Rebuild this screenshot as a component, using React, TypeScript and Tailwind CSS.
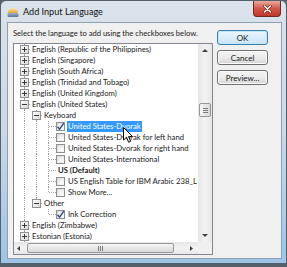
import React from 'react';

type Kind = 'plus' | 'minus' | 'check' | 'bold';

interface Row {
  level: number;
  label: string;
  kind: Kind;
  checked?: boolean;
  selected?: boolean;
  guides: boolean[];
  last?: boolean;
}

const rows: Row[] = [
  { level: 0, label: 'English (Republic of the Philippines)', kind: 'plus', guides: [] },
  { level: 0, label: 'English (Singapore)', kind: 'plus', guides: [] },
  { level: 0, label: 'English (South Africa)', kind: 'plus', guides: [] },
  { level: 0, label: 'English (Trinidad and Tobago)', kind: 'plus', guides: [] },
  { level: 0, label: 'English (United Kingdom)', kind: 'plus', guides: [] },
  { level: 0, label: 'English (United States)', kind: 'minus', guides: [] },
  { level: 1, label: 'Keyboard', kind: 'minus', guides: [true] },
  { level: 2, label: 'United States-Dvorak', kind: 'check', checked: true, selected: true, guides: [true, true] },
  { level: 2, label: 'United States-Dvorak for left hand', kind: 'check', guides: [true, true] },
  { level: 2, label: 'United States-Dvorak for right hand', kind: 'check', guides: [true, true] },
  { level: 2, label: 'United States-International', kind: 'check', guides: [true, true] },
  { level: 2, label: 'US (Default)', kind: 'bold', guides: [true, true] },
  { level: 2, label: 'US English Table for IBM Arabic 238_L', kind: 'check', guides: [true, true] },
  { level: 2, label: 'Show More...', kind: 'check', guides: [true, true], last: true },
  { level: 1, label: 'Other', kind: 'minus', guides: [true], last: true },
  { level: 2, label: 'Ink Correction', kind: 'check', checked: true, guides: [true, false], last: true },
  { level: 0, label: 'English (Zimbabwe)', kind: 'plus', guides: [] },
  { level: 0, label: 'Estonian (Estonia)', kind: 'plus', guides: [] },
];

const LINE = '#a0a0a0';

function GuideCell({ on }: { on: boolean }) {
  return (
    <svg width="12" height="11" className="shrink-0" shapeRendering="crispEdges">
      {on && <line x1="6.5" y1="0" x2="6.5" y2="11" stroke={LINE} strokeDasharray="1 1" />}
    </svg>
  );
}

function OwnCell({ row }: { row: Row }) {
  const expander = row.kind === 'plus' || row.kind === 'minus';
  const w = expander ? 12 : 14;
  return (
    <svg width={w} height="11" className="shrink-0" shapeRendering="crispEdges">
      <line x1="6.5" y1="0" x2="6.5" y2={row.last ? 5.5 : 11} stroke={LINE} strokeDasharray="1 1" />
      <line x1="7" y1="5.5" x2={w} y2="5.5" stroke={LINE} strokeDasharray="1 1" />
      {expander && (
        <>
          <defs>
            <linearGradient id="exp" x1="0" y1="0" x2="1" y2="1">
              <stop offset="0" stopColor="#ffffff" />
              <stop offset="1" stopColor="#d6d6d6" />
            </linearGradient>
          </defs>
          <rect x="2.5" y="1.5" width="8" height="8" fill="url(#exp)" stroke="#919191" />
          <line x1="4" y1="5.5" x2="9" y2="5.5" stroke="#3a3a3a" />
          {row.kind === 'plus' && <line x1="6.5" y1="3" x2="6.5" y2="8" stroke="#3a3a3a" />}
        </>
      )}
    </svg>
  );
}

function CheckBox({ checked }: { checked?: boolean }) {
  return (
    <span className="relative w-[9px] h-[9px] shrink-0 border border-[#8e8f8f] bg-gradient-to-br from-[#d8d8d8] to-[#fbfbfb] flex items-center justify-center">
      <span className="w-[5px] h-[5px] bg-gradient-to-br from-[#e6e6e6] to-[#ffffff]" />
      {checked && (
        <svg width="9" height="9" viewBox="0 0 9 9" className="absolute -left-[1px] -top-[1px]">
          <path d="M1.5 4.8 L3.6 7.2 L7.8 1.2" fill="none" stroke="#2d4a8a" strokeWidth="1.4" />
        </svg>
      )}
    </span>
  );
}

function TreeRow({ row }: { row: Row }) {
  return (
    <div className="flex items-center h-[11px] pl-[4px] whitespace-nowrap">
      {row.guides.map((g, i) => (
        <GuideCell key={i} on={g} />
      ))}
      <OwnCell row={row} />
      {row.kind === 'check' && <CheckBox checked={row.checked} />}
      <span
        className={
          'px-[1px] leading-[11px] h-[11px] ' +
          (row.selected ? 'bg-[#3399ff] text-white' : 'text-[#1a1a1a]') +
          (row.kind === 'bold' ? ' font-bold' : '') +
          (row.kind === 'check' ? ' ml-[2px]' : ' ml-[1px]')
        }
      >
        {row.label}
      </span>
    </div>
  );
}

function Arrow({ dir }: { dir: 'up' | 'down' | 'left' | 'right' }) {
  const pts = {
    up: '2,5 5,2 8,5',
    down: '2,2 5,5 8,2',
    left: '5,2 2,4.5 5,7',
    right: '3,2 6,4.5 3,7',
  }[dir];
  return (
    <svg width="10" height="8" viewBox="0 0 10 8">
      <polygon points={pts} fill="#404040" />
    </svg>
  );
}

function Button({ label, primary }: { label: string; primary?: boolean }) {
  return (
    <div
      className={
        'w-[51px] h-[15px] rounded-[3px] border flex items-center justify-center text-[8px] text-[#1a1a1a] ' +
        (primary
          ? 'border-[#3c7fb1] bg-gradient-to-b from-[#eaf6fd] to-[#c9e5f8] shadow-[inset_0_0_0_1px_#bfe6fb]'
          : 'border-[#707070] bg-gradient-to-b from-[#f4f4f4] via-[#ebebeb] to-[#d6d6d6] shadow-[inset_0_0_0_1px_#fbfbfb]')
      }
    >
      {label}
    </div>
  );
}

export default function App() {
  return (
    <div className="relative w-[287px] h-[267px] overflow-hidden bg-[#56606a] font-['Lato',sans-serif]">
      {/* Window frame */}
      <div className="h-[264px] w-[287px] rounded-t-[6px] border border-[#53616f] bg-gradient-to-b from-[#dbe3eb] via-[#cbd8e5] to-[#9fc3e6] flex flex-col">
        {/* Title bar */}
        <div className="h-[21px] flex items-center pl-[6px] shrink-0">
          <svg width="12" height="12" viewBox="0 0 12 12" className="shrink-0">
            <defs>
              <linearGradient id="sun" x1="0" y1="0" x2="0" y2="1">
                <stop offset="0" stopColor="#fde7a0" />
                <stop offset="1" stopColor="#e7a43a" />
              </linearGradient>
              <linearGradient id="base" x1="0" y1="0" x2="0" y2="1">
                <stop offset="0" stopColor="#9db3c9" />
                <stop offset="1" stopColor="#5b7592" />
              </linearGradient>
            </defs>
            <path d="M1 7 A5 5 0 0 1 11 7 Z" fill="url(#sun)" />
            <rect x="0.5" y="7" width="11" height="4" rx="1" fill="url(#base)" />
          </svg>
          <span className="ml-[4px] text-[9.1px] text-[#111] leading-none">Add Input Language</span>
          <div className="flex-1" />
          <div className="self-start mr-[5px] w-[28px] h-[16px] rounded-b-[4px] border border-t-0 border-[#6f2a23] bg-gradient-to-b from-[#e9a99b] via-[#d0574a] to-[#c2352a] flex items-center justify-center">
            <svg width="9" height="8" viewBox="0 0 9 8">
              <path d="M1.5 1 L7.5 7 M7.5 1 L1.5 7" stroke="#5a1a14" strokeWidth="2.6" strokeLinecap="round" />
              <path d="M1.5 1 L7.5 7 M7.5 1 L1.5 7" stroke="#ffffff" strokeWidth="1.5" strokeLinecap="round" />
            </svg>
          </div>
        </div>

        {/* Client area */}
        <div className="ml-[6px] mr-[4px] h-[237px] border border-[#8da1b5] bg-[#f0f0f0] flex">
          <div className="w-[205px] shrink-0 pl-[5px] pt-[4px] flex flex-col">
            <div className="h-[12px] leading-[12px] text-[7.6px] text-[#1a1a1a] whitespace-nowrap">
              Select the language to add using the checkboxes below.
            </div>
            <div className="mt-[4px] w-[200px] h-[212px] border border-[#828790] bg-white flex flex-col text-[7.7px]">
              <div className="flex h-[198px]">
                <div className="w-[184px] overflow-hidden">
                  {rows.map((r, i) => (
                    <TreeRow key={i} row={r} />
                  ))}
                </div>
                {/* Vertical scrollbar */}
                <div className="w-[14px] flex flex-col bg-gradient-to-r from-[#e6e6e6] via-[#f3f3f3] to-[#e6e6e6]">
                  <div className="h-[12px] flex items-center justify-center pt-[2px]">
                    <Arrow dir="up" />
                  </div>
                  <div className="flex-1 px-[1px] pt-[47px]">
                    <div className="h-[14px] rounded-[2px] border border-[#979797] bg-gradient-to-r from-[#f5f5f5] to-[#d9d9d9] flex flex-col items-center justify-center gap-[1px]">
                      <span className="w-[5px] h-px bg-[#7a7a7a]" />
                      <span className="w-[5px] h-px bg-[#7a7a7a]" />
                      <span className="w-[5px] h-px bg-[#7a7a7a]" />
                    </div>
                  </div>
                  <div className="h-[12px] flex items-center justify-center">
                    <Arrow dir="down" />
                  </div>
                </div>
              </div>
              {/* Horizontal scrollbar */}
              <div className="flex h-[12px]">
                <div className="w-[184px] flex bg-gradient-to-b from-[#e6e6e6] via-[#f3f3f3] to-[#e6e6e6]">
                  <div className="w-[12px] flex items-center justify-center">
                    <Arrow dir="left" />
                  </div>
                  <div className="ml-[1px] w-[147px] py-[1px]">
                    <div className="h-full rounded-[2px] border border-[#979797] bg-gradient-to-b from-[#f5f5f5] to-[#d9d9d9] flex items-center justify-center gap-[1px]">
                      <span className="w-px h-[5px] bg-[#7a7a7a]" />
                      <span className="w-px h-[5px] bg-[#7a7a7a]" />
                      <span className="w-px h-[5px] bg-[#7a7a7a]" />
                    </div>
                  </div>
                  <div className="flex-1" />
                  <div className="w-[12px] flex items-center justify-center">
                    <Arrow dir="right" />
                  </div>
                </div>
                <div className="w-[14px] bg-[#f0f0f0]" />
              </div>
            </div>
          </div>

          {/* Buttons */}
          <div className="ml-[4px] pt-[7px] flex flex-col gap-[5px]">
            <Button label="OK" primary />
            <Button label="Cancel" />
            <Button label="Preview..." />
          </div>
        </div>
      </div>

      {/* Mouse pointer */}
      <svg width="11" height="17" viewBox="0 0 11 17" className="absolute left-[123px] top-[127px]">
        <path d="M0.5 0.5 L0.5 13 L3.5 10.2 L5.6 15.2 L7.6 14.3 L5.6 9.6 L9.6 9.6 Z" fill="#ffffff" stroke="#000000" strokeWidth="1" strokeLinejoin="round" />
      </svg>
    </div>
  );
}
